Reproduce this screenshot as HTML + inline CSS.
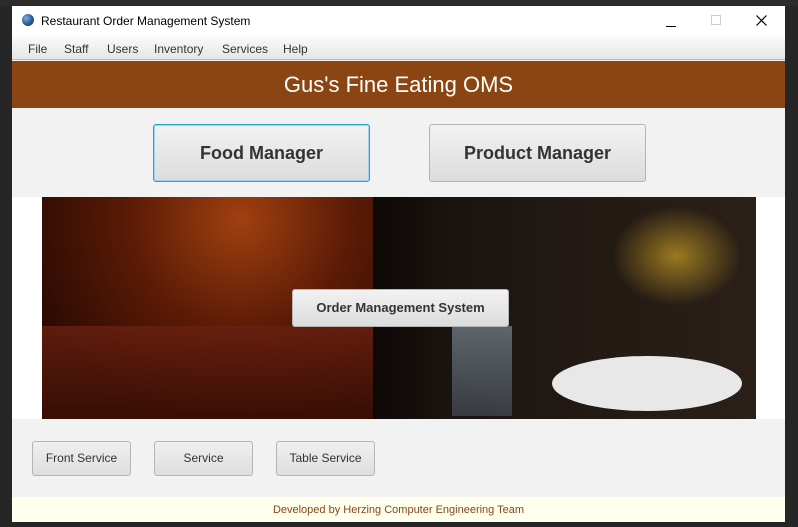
<!DOCTYPE html>
<html><head><style>
*{margin:0;padding:0;box-sizing:border-box}
body{width:798px;height:527px;background:#262626;position:relative;overflow:hidden;font-family:"Liberation Sans","DejaVu Sans",sans-serif}
.a{position:absolute}
.btn{position:absolute;border:1px solid #b5b5b5;border-radius:3px;background:linear-gradient(#f2f2f2,#dcdcdc);color:#333;text-align:center;font-weight:bold}
.sb{position:absolute;border:1px solid #b5b5b5;border-radius:3px;background:linear-gradient(#f0f0f0,#dedede);color:#333;text-align:center;font-size:12px;line-height:33px}
</style></head><body>
<div class="a" style="left:0;top:0;width:798px;height:6px;background:#2b2b2b"></div>
<div class="a" style="left:12px;top:6px;width:773px;height:516px;background:#f2f2f2">
  <div class="a" style="left:0;top:0;width:773px;height:30px;background:#fff"></div>
  <div class="a" style="left:10px;top:8px;width:12px;height:12px;border-radius:50%;background:radial-gradient(circle at 35% 35%,#7fb0e0,#2a5a90 55%,#1a2f50)"></div>
  <div class="a" style="left:29px;top:8px;font-size:12px;color:#000">Restaurant Order Management System</div>
  <div class="a" style="left:654px;top:20px;width:10px;height:1px;background:#000"></div>
  <div class="a" style="left:699px;top:9px;width:10px;height:10px;border:1px solid #ccc"></div>
  <svg class="a" style="left:744px;top:9px" width="11" height="11"><path d="M0.5 0.5L10.5 10.5M10.5 0.5L0.5 10.5" stroke="#000" stroke-width="1.2"/></svg>
  <div class="a" style="left:0;top:30px;width:773px;height:24px;background:linear-gradient(#fafafa,#e6e6e6);border-bottom:1px solid #bbb;font-size:12px;color:#333">
    <span class="a" style="left:16px;top:6px">File</span><span class="a" style="left:52px;top:6px">Staff</span><span class="a" style="left:95px;top:6px">Users</span><span class="a" style="left:142px;top:6px">Inventory</span><span class="a" style="left:210px;top:6px">Services</span><span class="a" style="left:271px;top:6px">Help</span>
  </div>
  <div class="a" style="left:0;top:55px;width:773px;height:47px;background:#8b4513;color:#fff;font-size:22px;text-align:center;line-height:47px">Gus's Fine Eating OMS</div>
  <div class="btn" style="left:141px;top:118px;width:217px;height:58px;line-height:56px;font-size:18px;border-color:#2aa0d8;box-shadow:0 0 0 1px #9fd4ee inset">Food Manager</div>
  <div class="btn" style="left:417px;top:118px;width:217px;height:58px;line-height:56px;font-size:18px">Product Manager</div>
  <div class="a" style="left:0;top:191px;width:773px;height:222px;background:#fff"></div>
  <div class="a" style="left:30px;top:191px;width:331px;height:222px;background:radial-gradient(ellipse at 60% 10%,#a04010,#5a1a06 40%,#2a0a03 80%),#3a1005"></div>
  <div class="a" style="left:30px;top:320px;width:331px;height:93px;background:linear-gradient(#6a2010,#3a0e05);opacity:.8"></div>
  <div class="a" style="left:361px;top:191px;width:383px;height:222px;background:linear-gradient(90deg,#0d0806,#1a1410 20%,#241a14 60%,#2a2018)"></div>
  <div class="a" style="left:600px;top:200px;width:130px;height:100px;background:radial-gradient(ellipse,#9a7a20,transparent 70%)"></div>
  <div class="a" style="left:540px;top:350px;width:190px;height:55px;border-radius:50%;background:#e8e8e8"></div>
  <div class="a" style="left:440px;top:320px;width:60px;height:90px;background:linear-gradient(#8a9aa8,#4a5560);opacity:.6"></div>
  <div class="btn" style="left:280px;top:283px;width:217px;height:38px;line-height:36px;font-size:13px">Order Management System</div>
  <div class="sb" style="left:20px;top:435px;width:99px;height:35px">Front Service</div>
  <div class="sb" style="left:142px;top:435px;width:99px;height:35px">Service</div>
  <div class="sb" style="left:264px;top:435px;width:99px;height:35px">Table Service</div>
  <div class="a" style="left:0;top:491px;width:773px;height:25px;background:#fffff0;color:#8b4513;font-size:11px;text-align:center;line-height:26px">Developed by Herzing Computer Engineering Team</div>
</div>
</body></html>
